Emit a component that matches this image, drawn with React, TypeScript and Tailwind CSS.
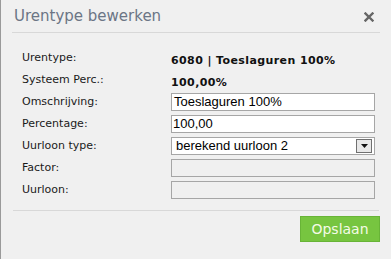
import React from "react";

const labelFont = { fontFamily: '"DejaVu Sans", Verdana, sans-serif' };

function Row({ label, children }: { label: string; children: React.ReactNode }) {
  return (
    <div className="flex items-center h-[22px]">
      <div className="w-[149px] text-[11px] text-[#1a1a1a]" style={labelFont}>{label}</div>
      <div className="flex-1">{children}</div>
    </div>
  );
}

export default function App() {
  return (
    <div className="w-[391px] h-[259px] bg-[#f0f0f0] border-l border-[#9a9a9a] flex flex-col">
      <div className="mx-[11px] h-[33px] border-b border-[#d8d8d8] flex items-center justify-between pl-[2px] pr-[6px]">
        <span className="text-[15px] text-[#6b7585]" style={labelFont}>Urentype bewerken</span>
        <svg width="10" height="10" viewBox="0 0 10 10" className="mt-[1px]">
          <path d="M1.5 1.5 L8.5 8.5 M8.5 1.5 L1.5 8.5" stroke="#666" strokeWidth="2.4" strokeLinecap="square" />
        </svg>
      </div>
      <div className="pl-[21px] pr-[16px] pt-[14px]">
        <Row label="Urentype:">
          <span className="text-[11px] font-bold text-[#111] tracking-[0.4px]" style={labelFont}>6080 | Toeslaguren 100%</span>
        </Row>
        <Row label="Systeem Perc.:">
          <span className="text-[11px] font-bold text-[#111] tracking-[0.4px]" style={labelFont}>100,00%</span>
        </Row>
        <Row label="Omschrijving:">
          <div className="h-[18px] border border-[#a6a6a6] bg-white flex items-center px-[2px] text-[13px] text-black" style={{ fontFamily: '"Liberation Sans", Arial, sans-serif' }}>Toeslaguren 100%</div>
        </Row>
        <Row label="Percentage:">
          <div className="h-[18px] border border-[#a6a6a6] bg-white flex items-center px-[1px] text-[13px] text-black" style={{ fontFamily: '"Liberation Sans", Arial, sans-serif' }}>100,00</div>
        </Row>
        <Row label="Uurloon type:">
          <div className="h-[18px] border border-[#a6a6a6] bg-white flex items-center justify-between pl-[4px] pr-[2px] text-[13px] text-black" style={{ fontFamily: '"Liberation Sans", Arial, sans-serif' }}>
            <span>berekend uurloon 2</span>
            <div className="w-[16px] h-[14px] border border-[#707070] bg-[#e8e8e8] flex items-center justify-center">
              <svg width="7" height="4" viewBox="0 0 7 4"><path d="M0 0 H7 L3.5 4 Z" fill="#111" /></svg>
            </div>
          </div>
        </Row>
        <Row label="Factor:">
          <div className="h-[18px] border border-[#a6a6a6] bg-[#f0f0f0]" />
        </Row>
        <Row label="Uurloon:">
          <div className="h-[18px] border border-[#a6a6a6] bg-[#f0f0f0]" />
        </Row>
      </div>
      <div className="mx-[12px] mt-[9px] border-t border-[#d8d8d8]" />
      <div className="flex justify-end pr-[11px] pt-[5px]">
        <button className="w-[80px] h-[26px] bg-[#77c540] border border-[#68b437] text-[#f4fbe6] text-[14px] flex items-center justify-center" style={{ fontFamily: '"DejaVu Sans", Verdana, sans-serif' }}>Opslaan</button>
      </div>
    </div>
  );
}
